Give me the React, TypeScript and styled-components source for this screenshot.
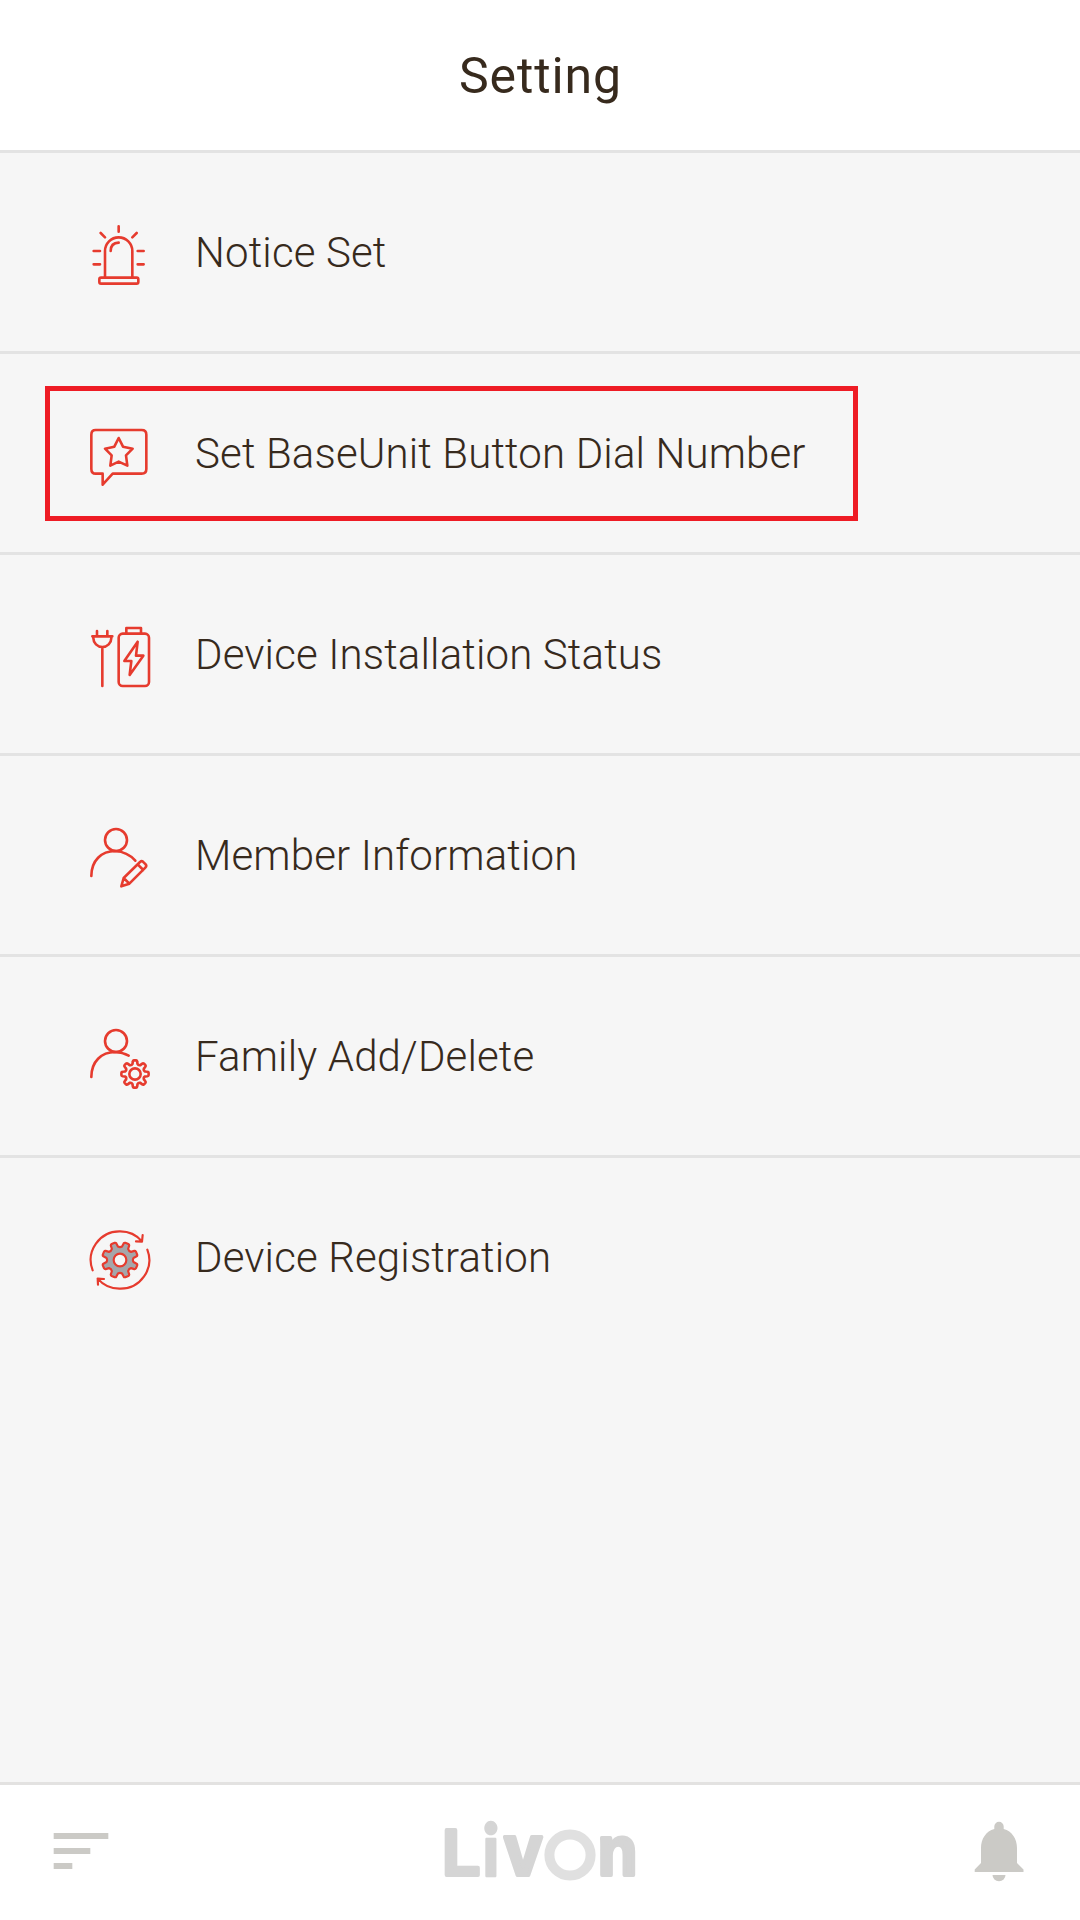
import React from 'react';
import styled, { createGlobalStyle } from 'styled-components';

const GlobalStyle = createGlobalStyle`
  * { box-sizing: border-box; }
  body { margin: 0; background: #f6f6f6; }
`;

const Screen = styled.div`
  display: flex;
  flex-direction: column;
  width: 1080px;
  height: 1920px;
  overflow: hidden;
  background: #f6f6f6;
  color: #372a1d;
  font-family: Roboto, 'Liberation Sans', sans-serif;
`;

const Header = styled.header`
  display: flex;
  justify-content: center;
  align-items: center;
  height: 153px;
  padding: 2px 0 0 1px;
  background: #fff;
  border-bottom: 3px solid #e3e3e3;
`;

const Title = styled.h1`
  margin: 0;
  font-size: 50px;
  font-weight: 400;
  line-height: 60px;
  letter-spacing: 0.9px;
`;

const List = styled.ul`
  flex: 1;
  margin: 0;
  padding: 0;
  list-style: none;
`;

const Row = styled.li`
  position: relative;
  display: flex;
  align-items: center;
  height: 201px;
  padding: 2px 0 0 80px;
  border-bottom: 3px solid #e3e3e3;

  &:last-child { border-bottom-color: transparent; }
`;

const RowIcon = styled.svg`
  flex: none;
  width: 80px;
  height: 80px;
  margin-right: 35px;
  fill: none;
  stroke: #e63b2e;
  stroke-width: 7.8;
  stroke-linecap: round;
  stroke-linejoin: round;
`;

const Label = styled.span`
  font-size: 42px;
  font-weight: 300;
  line-height: 50px;
  white-space: nowrap;
  letter-spacing: 0.14px;
`;

const Highlight = styled.div`
  position: absolute;
  left: 45px;
  top: 32px;
  width: 813px;
  height: 135px;
  border: 5px solid #ee1c25;
  pointer-events: none;
`;

const Footer = styled.footer`
  display: flex;
  justify-content: space-between;
  align-items: flex-start;
  height: 138px;
  padding: 15px 50px 0 54px;
  background: #fff;
  border-top: 3px solid #e3e2e1;
`;

const MenuButton = styled.div`
  display: flex;
  flex-direction: column;
  gap: 9px;
  width: 58px;
  padding-top: 33px;
`;

const Bar = styled.span<{ $width: number }>`
  width: ${(p) => p.$width}px;
  height: 6px;
  background: #cbcac6;
  box-shadow: -1px 0 #eeeeed, 1px 0 #eeeeed;
`;

const Logo = styled.svg`
  width: 220px;
  height: 105px;
  overflow: visible;
  font-family: 'Liberation Sans', Arial, sans-serif;
  font-weight: 700;
  fill: #d5d5d5;
  stroke: #d5d5d5;
  stroke-width: 4;
  stroke-linejoin: round;
`;

const DottedLetter = styled.text`
  font-family: Lato, 'Liberation Sans', sans-serif;
  font-weight: 900;
  stroke-width: 2.5;
`;

const Bell = styled.svg`
  width: 62px;
  height: 80px;
  margin-top: 15px;
  fill: #cbcac6;
`;

const gearPath = (cx: number, cy: number, inner: number, outer: number, turn: number) => {
  const at = (r: number, deg: number) => {
    const a = ((deg + turn) * Math.PI) / 180;
    return `${(cx + r * Math.cos(a)).toFixed(1)} ${(cy + r * Math.sin(a)).toFixed(1)}`;
  };
  let d = '';
  for (let i = 0; i < 8; i++) {
    const c = i * 45;
    d += `${i ? 'L' : 'M'}${at(inner, c - 14)}L${at(outer - 3, c - 10)}Q${at(outer, c - 9)} ${at(outer, c - 5)}`;
    d += `L${at(outer, c + 5)}Q${at(outer, c + 9)} ${at(outer - 3, c + 10)}L${at(inner, c + 14)}`;
    d += `Q${at(inner - 4, c + 22.5)} ${at(inner, c + 31)}`;
  }
  return d + 'Z';
};

const items = [
  {
    label: 'Notice Set',
    shift: -6,
    icon: (
      <>
        <path d="M75 187V108a41 41 0 0 1 82 0V187M92 108q0-24 24-25M116 50V34M75 67L62 54M157 67l13-13M60 108H41M60 148H41M173 108h18M173 148h18" />
        <rect x="58" y="188" width="117" height="18" rx="5" />
      </>
    ),
  },
  {
    label: 'Set BaseUnit Button Dial Number',
    shift: -3,
    highlighted: true,
    icon: (
      <>
        <path d="M47 45H185Q199 45 199 59V162Q199 176 185 176H98L68 209V176H47Q34 176 34 162V59Q34 45 47 45Z" />
        <path d="M116 69L129 95 158 101 138 121 142 152 116 140 91 152 95 121 75 101 103 95Z" />
      </>
    ),
  },
  {
    label: 'Device Installation Status',
    shift: 0,
    icon: (
      <>
        <path d="M37 64H97M40 64V69a27 27 0 0 0 54 0V64M51 62V48M82 62V48M67 98V213M139 54V39H183V54" />
        <rect x="116" y="56" width="91" height="157" rx="12" />
        <path d="M173 80L133 138H154L149 180 190 122H168Z" />
      </>
    ),
  },
  {
    label: 'Member Information',
    shift: 3,
    icon: (
      <>
        <circle cx="108" cy="75" r="33" />
        <path d="M34 183C34 137 64 108 106 108Q142 110 166 137" />
        <path d="M124 214L131 189 180 141Q186 136 191 142L197 148Q201 153 196 158L148 206ZM131 189L148 206M173 148L190 165" />
      </>
    ),
  },
  {
    label: 'Family Add/Delete',
    shift: 6,
    icon: (
      <>
        <circle cx="108" cy="78" r="33" />
        <path d="M34 186C34 140 64 111 106 111Q128 112 146 122" />
        <path d={gearPath(165, 177, 31, 41, 0)} />
        <circle cx="165" cy="177" r="17" />
      </>
    ),
  },
  {
    label: 'Device Registration',
    shift: -6,
    icon: (
      <g strokeWidth="6.5">
        <path d="M38 151A86 86 0 0 1 120 34A86 86 0 0 1 186 64M188 45L186 65 168 64M202 89A86 86 0 0 1 120 206A86 86 0 0 1 53 176M54 194L53 176 72 177" />
        <path fill="#a5a6aa" d={gearPath(120, 120, 41, 54, 22.5)} />
        <circle fill="#f6f6f6" cx="120" cy="120" r="19" />
      </g>
    ),
  },
];

export default function App() {
  return (
    <Screen>
      <GlobalStyle />
      <Header>
        <Title>Setting</Title>
      </Header>
      <List>
        {items.map((item) => (
          <Row key={item.label}>
            <RowIcon viewBox={`0 ${item.shift} 240 240`}>{item.icon}</RowIcon>
            <Label>{item.label}</Label>
            {item.highlighted && <Highlight />}
          </Row>
        ))}
      </List>
      <Footer>
        <MenuButton>
          <Bar $width={54} />
          <Bar $width={36} />
          <Bar $width={18} />
        </MenuButton>
        <Logo viewBox="430 1800 220 105" role="img" aria-label="Livon">
          <text transform="translate(442.5 1875) scale(.94 1)" fontSize="65">L</text>
          <DottedLetter transform="translate(491 1875.700) scale(.86 .96)" textAnchor="middle" fontSize="75">i</DottedLetter>
          <text transform="translate(504.500 1875) scale(.92 1)" fontSize="73">v</text>
          <circle cx="570" cy="1855" r="20.6" fill="none" stroke="#e0e0e0" strokeWidth="10" />
          <text transform="translate(597.5 1875) scale(.92 1)" fontSize="71">n</text>
        </Logo>
        <Bell viewBox="968 1815 62 80">
          <path d="M994.3 1829V1826.500a4.700 4.700 0 0 1 9.400 0V1829C1012 1831 1017 1839 1017 1848V1863L1023.500 1869.500V1872H974.700V1869.500L981 1863V1848C981 1839 986 1831 994.300 1829ZM992.500 1875H1005.500A6.500 6.200 0 0 1 992.500 1875Z" />
        </Bell>
      </Footer>
    </Screen>
  );
}
